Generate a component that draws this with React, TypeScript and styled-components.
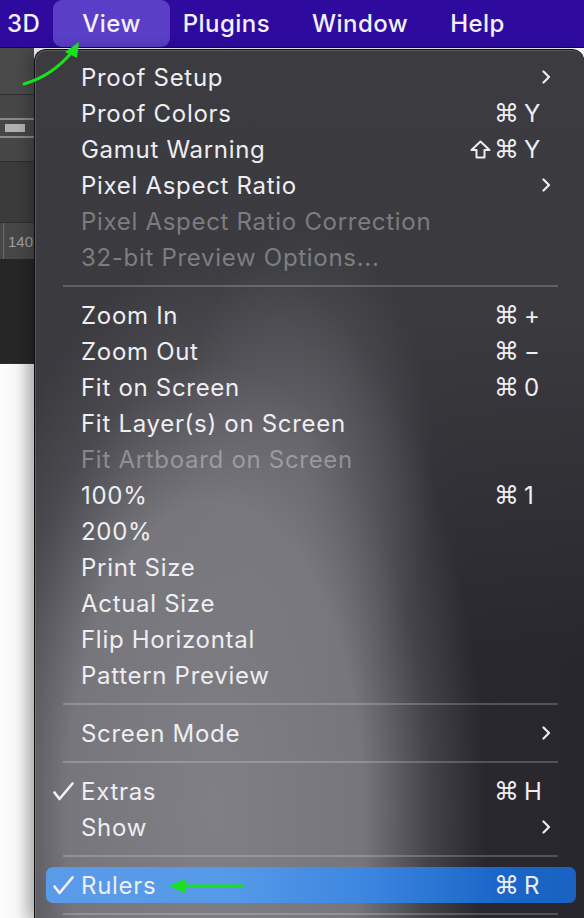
import React from "react";
import styled, { createGlobalStyle } from "styled-components";

const Global = createGlobalStyle`
  html, body { margin: 0; padding: 0; background: #fafafa; }
  body { font-family: Inter, "Noto Sans", "DejaVu Sans", sans-serif; -webkit-font-smoothing: antialiased; }
`;

const Screen = styled.div`
  position: relative;
  width: 584px;
  height: 918px;
  overflow: hidden;
  display: flex;
  flex-direction: column;
`;

const MenuBar = styled.div`
  height: 47px;
  flex: 0 0 47px;
  background: #2e0b9e;
  border-bottom: 1px solid #120640;
  display: flex;
  align-items: stretch;
  margin-left: -14px;
`;

const BarItem = styled.div<{ $active?: boolean }>`
  display: flex;
  align-items: center;
  padding: 0 ${(p) => (p.$active ? 29 : 21)}px;
  margin: 0 ${(p) => (p.$active ? -8 : 0)}px;
  border-radius: 9px;
  background: ${(p) => (p.$active ? "#5a3ec8" : "transparent")};
  color: #f2f0fa;
  font-size: 24px;
  font-weight: 500;
  letter-spacing: 0.45px;
`;

const Body = styled.div`
  flex: 1;
  display: flex;
  min-height: 0;
`;

const LeftStrip = styled.div`
  width: 34px;
  flex: 0 0 34px;
  display: flex;
  flex-direction: column;
`;

const StripBlock = styled.div<{ $h: number; $bg: string }>`
  height: ${(p) => p.$h}px;
  flex: 0 0 ${(p) => p.$h}px;
  background: ${(p) => p.$bg};
  border-bottom: 1px solid #2f2f2f;
`;

const OptionsPanel = styled.div`
  height: 66px;
  flex: 0 0 66px;
  background: #464646;
  border-bottom: 1px solid #2c2c2c;
  display: flex;
  flex-direction: column;
  justify-content: center;
`;

const SliderBox = styled.div`
  height: 16px;
  border-top: 2px solid #8a8a8a;
  border-bottom: 2px solid #8a8a8a;
  display: flex;
  align-items: center;
  padding-left: 5px;
`;

const SliderKnob = styled.div`
  width: 20px;
  height: 8px;
  background: #b0b0b0;
`;

const Ruler = styled.div`
  height: 36px;
  flex: 0 0 36px;
  background: #474747;
  display: flex;
  align-items: center;
  padding-left: 3px;
  gap: 4px;
  font-family: "Liberation Sans", Arial, sans-serif;
  font-size: 15px;
  color: #a0a0a0;
  white-space: nowrap;
`;

const Tick = styled.div`
  width: 1px;
  flex: 0 0 1px;
  align-self: stretch;
  background: #6a6a6a;
`;

const Canvas = styled.div`
  flex: 1;
  background: linear-gradient(to right, #fdfdfd 0%, #f6f6f6 50%, #dedede 100%);
`;

const Panel = styled.div`
  flex: 1;
  margin-top: 1px;
  border-radius: 12px 12px 0 0;
  border: 1px solid #0c0c0e;
  border-bottom: none;
  border-right: none;
  box-shadow: inset 1px 1px 0 rgba(255, 255, 255, 0.16), -6px 0 14px rgba(0, 0, 0, 0.22);
  padding-top: 9px;
  display: flex;
  flex-direction: column;
  background:
    radial-gradient(ellipse 130px 240px at 270px 420px, rgba(124, 123, 129, 0.5) 0%, rgba(124, 123, 129, 0.25) 55%, rgba(124, 123, 129, 0) 100%),
    radial-gradient(ellipse 270px 560px at 180px 760px, rgba(128, 127, 133, 1) 0%, rgba(122, 121, 127, 0.95) 55%, rgba(90, 89, 95, 0.5) 80%, rgba(60, 60, 65, 0) 100%),
    linear-gradient(to bottom, #3b3b40 0%, #3a3a3f 30%, rgba(58, 58, 63, 0) 70%),
    linear-gradient(to right, #3a393f 0%, #34333a 55%, #29282e 78%, #28272d 100%);
`;

const Row = styled.div<{ $selected?: boolean; $disabled?: boolean }>`
  height: 36px;
  flex: 0 0 36px;
  margin: 0 8px 0 11px;
  border-radius: 7px;
  display: grid;
  grid-template-columns: 35px 1fr auto;
  align-items: center;
  font-size: 24px;
  letter-spacing: 0.7px;
  color: ${(p) => (p.$disabled ? "rgba(235,235,240,0.38)" : "#eeeef2")};
  background: ${(p) =>
    p.$selected
      ? "linear-gradient(to right, #5a9be8 0%, #559ae8 35%, #3d86e0 60%, #1b66c8 85%, #1962c2 100%)"
      : "transparent"};
`;

const CheckCell = styled.div`
  display: flex;
  align-items: center;
  padding-left: 7px;
`;

const Label = styled.div`
  white-space: nowrap;
`;

const Shortcut = styled.div`
  display: flex;
  align-items: center;
  gap: 5px;
  margin-right: 33px;
`;

const Mods = styled.span`
  display: flex;
  align-items: center;
  gap: 3px;
  font-family: "DejaVu Sans", sans-serif;
  font-size: 25px;
  letter-spacing: 0;
`;

const Key = styled.span`
  width: 19px;
  text-align: left;
  font-size: 24px;
  letter-spacing: 0;
`;

const Chevron = styled.div`
  margin-right: 25px;
  display: flex;
  align-items: center;
`;

const Separator = styled.div`
  height: 2px;
  flex: 0 0 2px;
  margin: 10px 26px 10px 28px;
  background: rgba(255, 255, 255, 0.2);
`;

const Overlay = styled.svg`
  position: absolute;
  left: 0;
  top: 0;
  pointer-events: none;
`;

type Entry =
  | { sep: true }
  | {
      sep?: false;
      label: string;
      disabled?: boolean;
      checked?: boolean;
      selected?: boolean;
      shift?: boolean;
      k?: string;
      sub?: boolean;
    };

const entries: Entry[] = [
  { label: "Proof Setup", sub: true },
  { label: "Proof Colors", k: "Y" },
  { label: "Gamut Warning", shift: true, k: "Y" },
  { label: "Pixel Aspect Ratio", sub: true },
  { label: "Pixel Aspect Ratio Correction", disabled: true },
  { label: "32-bit Preview Options...", disabled: true },
  { sep: true },
  { label: "Zoom In", k: "+" },
  { label: "Zoom Out", k: "−" },
  { label: "Fit on Screen", k: "0" },
  { label: "Fit Layer(s) on Screen" },
  { label: "Fit Artboard on Screen", disabled: true },
  { label: "100%", k: "1" },
  { label: "200%" },
  { label: "Print Size" },
  { label: "Actual Size" },
  { label: "Flip Horizontal" },
  { label: "Pattern Preview" },
  { sep: true },
  { label: "Screen Mode", sub: true },
  { sep: true },
  { label: "Extras", checked: true, k: "H" },
  { label: "Show", sub: true },
  { sep: true },
  { label: "Rulers", checked: true, selected: true, k: "R" },
  { sep: true },
];

const CheckIcon = () => (
  <svg width="21" height="19" viewBox="0 0 21 19">
    <polyline points="1.5,10.5 6.5,17 19.5,1.5" fill="none" stroke="#f2f2f4" strokeWidth="2.6" strokeLinecap="round" strokeLinejoin="round" />
  </svg>
);

const ChevronIcon = () => (
  <svg width="9" height="14" viewBox="0 0 9 14">
    <polyline points="1.5,1.5 7,7 1.5,12.5" fill="none" stroke="#eeeef2" strokeWidth="2.2" strokeLinecap="round" strokeLinejoin="round" />
  </svg>
);

const ShiftIcon = () => (
  <svg width="21" height="19" viewBox="0 0 21 19">
    <path d="M10.5 1.5 L19.5 10 L14.5 10 L14.5 17.5 L6.5 17.5 L6.5 10 L1.5 10 Z" fill="none" stroke="#eeeef2" strokeWidth="2" strokeLinejoin="round" />
  </svg>
);

export default function App() {
  return (
    <>
      <Global />
      <Screen>
        <MenuBar>
          <BarItem>3D</BarItem>
          <BarItem $active>View</BarItem>
          <BarItem>Plugins</BarItem>
          <BarItem>Window</BarItem>
          <BarItem>Help</BarItem>
        </MenuBar>
        <Body>
          <LeftStrip>
            <StripBlock $h={46} $bg="#4a4a4a" />
            <OptionsPanel>
              <SliderBox>
                <SliderKnob />
              </SliderBox>
            </OptionsPanel>
            <StripBlock $h={60} $bg="#3b3b3b" />
            <Ruler>
              <Tick />
              <span>140</span>
            </Ruler>
            <StripBlock $h={104} $bg="#262626" />
            <Canvas />
          </LeftStrip>
          <Panel>
            {entries.map((e, i) =>
              e.sep ? (
                <Separator key={i} />
              ) : (
                <Row key={i} $selected={e.selected} $disabled={e.disabled}>
                  <CheckCell>{e.checked ? <CheckIcon /> : null}</CheckCell>
                  <Label>{e.label}</Label>
                  {e.k ? (
                    <Shortcut>
                      <Mods>
                        {e.shift ? <ShiftIcon /> : null}
                        <span>⌘</span>
                      </Mods>
                      <Key>{e.k}</Key>
                    </Shortcut>
                  ) : e.sub ? (
                    <Chevron>
                      <ChevronIcon />
                    </Chevron>
                  ) : (
                    <span />
                  )}
                </Row>
              )
            )}
          </Panel>
        </Body>
        <Overlay width="584" height="918" viewBox="0 0 584 918">
          <path d="M24 84 Q52 76 72 52" fill="none" stroke="#18e21c" strokeWidth="3" strokeLinecap="round" />
          <polygon points="79,42 65,52 77,58" fill="#18e21c" />
          <line x1="243" y1="886" x2="180" y2="886" stroke="#18e21c" strokeWidth="3" />
          <polygon points="169,886 185,879 185,893" fill="#18e21c" />
        </Overlay>
      </Screen>
    </>
  );
}
